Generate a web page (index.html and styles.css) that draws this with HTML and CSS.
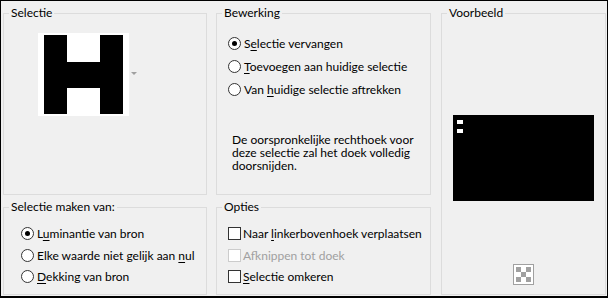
FILE: index.html
```html
<!DOCTYPE html>
<html lang="nl">

<head>
    <meta charset="UTF-8">
    <title>Selectie</title>
    <link rel="stylesheet" href="styles.css">
</head>

<body>
    <div class="dialog">
        <fieldset class="group sel">
            <legend>Selectie</legend>
            <div class="picker">
                <div class="thumb">
                    <svg width="79" height="79" viewBox="0 0 79 79">
                        <rect width="79" height="79" fill="#000" />
                        <rect x="23" y="0" width="33" height="27" fill="#fff" />
                        <rect x="23" y="53" width="33" height="26" fill="#fff" />
                    </svg>
                </div>
                <svg class="arrow" width="6" height="4" viewBox="0 0 6 4">
                    <path d="M0 0h6L3 3z" fill="#a0a0a0" />
                </svg>
            </div>
        </fieldset>

        <fieldset class="group edit">
            <legend>Bewerking</legend>
            <div class="options">
                <label class="opt"><span class="radio on"></span><span>S<u>e</u>lectie vervangen</span></label>
                <label class="opt"><span class="radio"></span><span><u>T</u>oevoegen aan huidige selectie</span></label>
                <label class="opt"><span class="radio"></span><span>Van <u>h</u>uidige selectie aftrekken</span></label>
            </div>
            <p class="note">De oorspronkelijke rechthoek voor deze selectie zal het doek volledig doorsnijden.</p>
        </fieldset>

        <fieldset class="group preview">
            <legend>Voorbeeld</legend>
            <div class="canvas">
                <span class="dot"></span>
                <span class="dot"></span>
            </div>
            <div class="checker"><span></span></div>
        </fieldset>

        <fieldset class="group source">
            <legend>Selectie maken van:</legend>
            <div class="options tight">
                <label class="opt"><span class="radio on"></span><span>L<u>u</u>minantie van bron</span></label>
                <label class="opt"><span class="radio"></span><span>Elke waarde niet gelijk aan <u>n</u>ul</span></label>
                <label class="opt"><span class="radio"></span><span><u>D</u>ekking van bron</span></label>
            </div>
        </fieldset>

        <fieldset class="group extra">
            <legend>Opties</legend>
            <div class="options tight">
                <label class="opt"><span class="check"></span><span>Naar <u>l</u>inkerbovenhoek verplaatsen</span></label>
                <label class="opt off"><span class="check"></span><span>Af<u>k</u>nippen tot doek</span></label>
                <label class="opt"><span class="check"></span><span><u>S</u>electie omkeren</span></label>
            </div>
        </fieldset>
    </div>
</body>

</html>
```

FILE: styles.css
```css
* {
    box-sizing: border-box;
}

body {
    margin: 0;
    font-family: Lato, "Noto Sans", sans-serif;
    font-size: 12px;
    color: #000;
}

.dialog {
    width: 608px;
    height: 298px;
    background: #f0f0f0;
    border: 1px solid #000;
    border-bottom-width: 2px;
    padding: 5px 0 1px 2px;
    display: grid;
    grid-template-columns: 204px 215px 166px;
    grid-template-rows: 189px 95px;
    column-gap: 9px;
    row-gap: 5px;
}

.group {
    margin: 0;
    padding: 0;
    border: 1px solid #dcdcdc;
    min-width: 0;
}

.group legend {
    margin-left: 5px;
    padding: 0 2px;
    line-height: 14px;
}

.sel {
    grid-column: 1;
    grid-row: 1;
}

.edit {
    grid-column: 2;
    grid-row: 1;
}

.preview {
    grid-column: 3;
    grid-row: 1 / 3;
    margin-left: 1px;
    display: flex;
    flex-direction: column;
    align-items: center;
}

.source {
    grid-column: 1;
    grid-row: 2;
}

.extra {
    grid-column: 2;
    grid-row: 2;
}

/* thumbnail */
.picker {
    display: flex;
    align-items: center;
    gap: 2px;
    margin: 13px 0 0 34px;
}

.thumb {
    background: #fff;
    padding: 2px 6px;
    width: 91px;
    height: 83px;
}

.thumb svg {
    display: block;
}

.arrow {
    display: block;
    margin-top: -2px;
}

/* radios and checks */
.options {
    display: flex;
    flex-direction: column;
    margin: 12px 0 0 11px;
}

.opt {
    display: flex;
    align-items: center;
    height: 23px;
    white-space: nowrap;
}

.tight {
    margin-top: 9px;
}

.source .options {
    margin-left: 17px;
}

.tight .opt {
    height: 21.5px;
}

.radio {
    width: 13px;
    height: 13px;
    border: 1px solid #333;
    border-radius: 50%;
    background: #fff;
    margin-right: 3px;
    display: flex;
    align-items: center;
    justify-content: center;
    flex: none;
}

.radio.on::after {
    content: "";
    width: 5px;
    height: 5px;
    border-radius: 50%;
    background: #000;
}

.check {
    width: 13px;
    height: 13px;
    border: 1px solid #333;
    background: #fff;
    margin-right: 2px;
    flex: none;
}

.off {
    color: #a0a0a0;
}

.off .check {
    border-color: #cccccc;
}

u {
    text-underline-offset: 2px;
}

.note {
    margin: 32px 10px 0 15px;
    line-height: 13px;
}

/* preview */
.canvas {
    width: 141px;
    height: 86px;
    background: #000;
    margin-top: 95px;
    padding: 5px 0 0 4px;
    display: flex;
    flex-direction: column;
    gap: 5px;
}

.dot {
    display: block;
    width: 6px;
    height: 4px;
    background: #fff;
}

.checker {
    margin-top: 63px;
    width: 21px;
    height: 21px;
    border: 1px solid #a0a0a0;
    background: #fff;
    padding: 2px;
}

.checker span {
    display: block;
    width: 15px;
    height: 15px;
    background: repeating-conic-gradient(#fff 0 25%, #a0a0a0 0 50%) 0 0 / 10px 10px;
}
```
